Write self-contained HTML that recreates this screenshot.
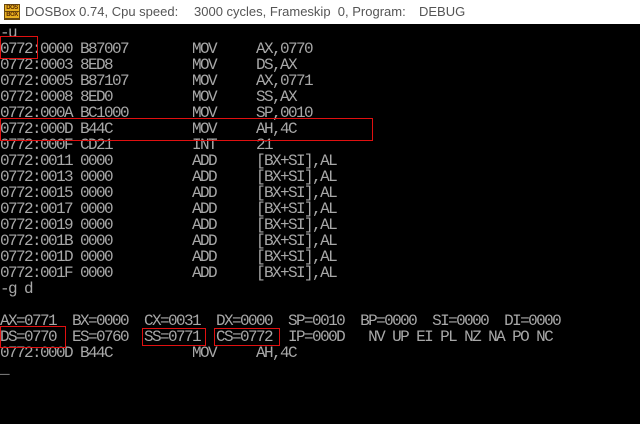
<!DOCTYPE html>
<html><head><meta charset="utf-8"><style>
body{margin:0;width:640px;height:424px;background:#000;overflow:hidden;position:relative}
#tb{position:absolute;left:0;top:0;width:640px;height:24px;background:#fff;font-family:"Liberation Sans","Noto Sans CJK SC",sans-serif;font-size:13px;color:#555;z-index:2}
#tb span{position:absolute;top:4px;white-space:pre}
#ic{position:absolute;left:4px;top:4px;width:16px;height:16px;background:#6b4a10}
#ic div{position:absolute;left:1px;width:14px;height:6px;background:#e8b020;font:bold 6px "Liberation Sans",sans-serif;color:#5a2a00;text-align:center;line-height:6px;letter-spacing:-0.5px}
pre{position:absolute;left:0;top:25px;margin:0;font-family:"Liberation Mono",monospace;font-size:16px;letter-spacing:-1.6px;line-height:16px;color:#a8a8a8}
.r{position:absolute;border:1px solid #e01010}
</style></head><body>
<div id="tb"><div id="ic"><div style="top:1px">DOS</div><div style="top:8px">BOX</div></div>
<span style="left:25px">DOSBox 0.74, Cpu speed:</span>
<span style="left:194px">3000 cycles, Frameskip  0, Program:</span>
<span style="left:419px">DEBUG</span></div>
<pre>-u
0772:0000 B87007        MOV     AX,0770
0772:0003 8ED8          MOV     DS,AX
0772:0005 B87107        MOV     AX,0771
0772:0008 8ED0          MOV     SS,AX
0772:000A BC1000        MOV     SP,0010
0772:000D B44C          MOV     AH,4C
0772:000F CD21          INT     21
0772:0011 0000          ADD     [BX+SI],AL
0772:0013 0000          ADD     [BX+SI],AL
0772:0015 0000          ADD     [BX+SI],AL
0772:0017 0000          ADD     [BX+SI],AL
0772:0019 0000          ADD     [BX+SI],AL
0772:001B 0000          ADD     [BX+SI],AL
0772:001D 0000          ADD     [BX+SI],AL
0772:001F 0000          ADD     [BX+SI],AL
-g d

AX=0771  BX=0000  CX=0031  DX=0000  SP=0010  BP=0000  SI=0000  DI=0000
DS=0770  ES=0760  SS=0771  CS=0772  IP=000D   NV UP EI PL NZ NA PO NC
0772:000D B44C          MOV     AH,4C
_</pre>
<div class="r" style="left:0;top:36px;width:36px;height:21px"></div>
<div class="r" style="left:0;top:118px;width:371px;height:21px"></div>
<div class="r" style="left:0;top:326px;width:64px;height:20px"></div>
<div class="r" style="left:142px;top:328px;width:62px;height:16px"></div>
<div class="r" style="left:214px;top:328px;width:64px;height:16px"></div>
</body></html>
